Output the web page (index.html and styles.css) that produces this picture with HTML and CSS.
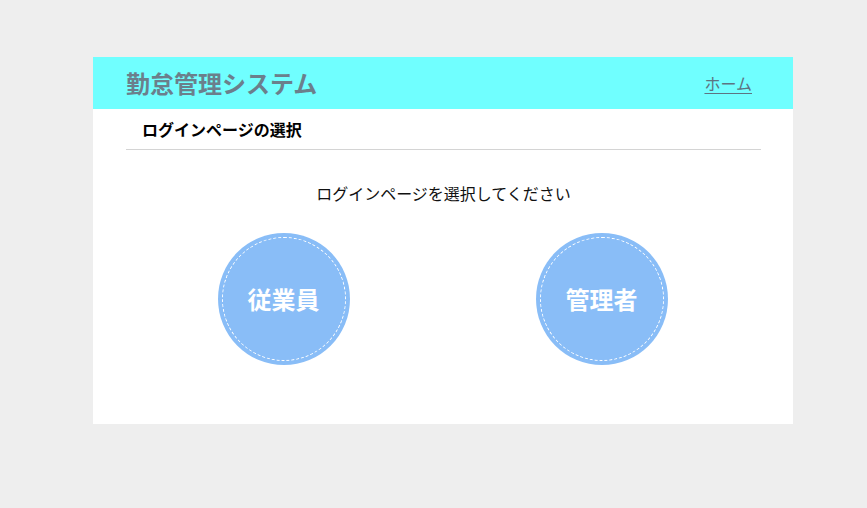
FILE: index.html
```html
<!DOCTYPE html>
<html lang="ja">
<head>
<meta charset="utf-8">
<title>勤怠管理システム</title>
<link rel="stylesheet" href="styles.css">
</head>
<body>
  <div class="panel">
    <header class="topbar">
      <h1 class="brand">勤怠管理システム</h1>
      <a class="home-link" href="#">ホーム</a>
    </header>
    <main class="content">
      <h2 class="section-title">ログインページの選択</h2>
      <p class="lead">ログインページを選択してください</p>
      <div class="choices">
        <a class="choice" href="#"><span class="ring">従業員</span></a>
        <a class="choice" href="#"><span class="ring">管理者</span></a>
      </div>
    </main>
  </div>
</body>
</html>
```

FILE: styles.css
```css
* {
  box-sizing: border-box;
}

body {
  margin: 0;
  background: #eeeeee;
  font-family: "Noto Sans CJK JP", "Noto Sans", sans-serif;
  color: #111;
}

.panel {
  width: 700px;
  margin: 57px 0 0 93px;
  background: #ffffff;
}

.topbar {
  height: 52px;
  background: #70ffff;
  display: flex;
  align-items: center;
  justify-content: space-between;
  padding: 0 41px 0 33px;
}

.brand {
  margin: 0;
  font-size: 24px;
  line-height: 1;
  font-weight: 700;
  color: #6b7f8c;
}

.home-link {
  font-size: 16px;
  line-height: 1;
  color: #5d7482;
  text-decoration: underline;
  text-underline-offset: 3px;
}

.content {
  padding: 0 32px 59px 33px;
}

.section-title {
  margin: 0;
  height: 41px;
  display: flex;
  align-items: center;
  padding-left: 16px;
  font-size: 16px;
  font-weight: 700;
  color: #000;
  border-bottom: 1px solid #d4d4d4;
}

.lead {
  margin: 31px 0 0;
  line-height: 24px;
  font-size: 16px;
  text-align: center;
  color: #111;
}

.choices {
  margin-top: 28px;
  display: flex;
  justify-content: center;
  gap: 186px;
  padding-right: 2px;
}

.choice {
  width: 132px;
  height: 132px;
  border-radius: 50%;
  background: #89bdf7;
  display: flex;
  padding: 4px;
  text-decoration: none;
}

.ring {
  flex: 1;
  border-radius: 50%;
  border: 1px dashed #ffffff;
  display: flex;
  align-items: center;
  justify-content: center;
  color: #ffffff;
  font-size: 24px;
  font-weight: 700;
  line-height: 1;
}
```
